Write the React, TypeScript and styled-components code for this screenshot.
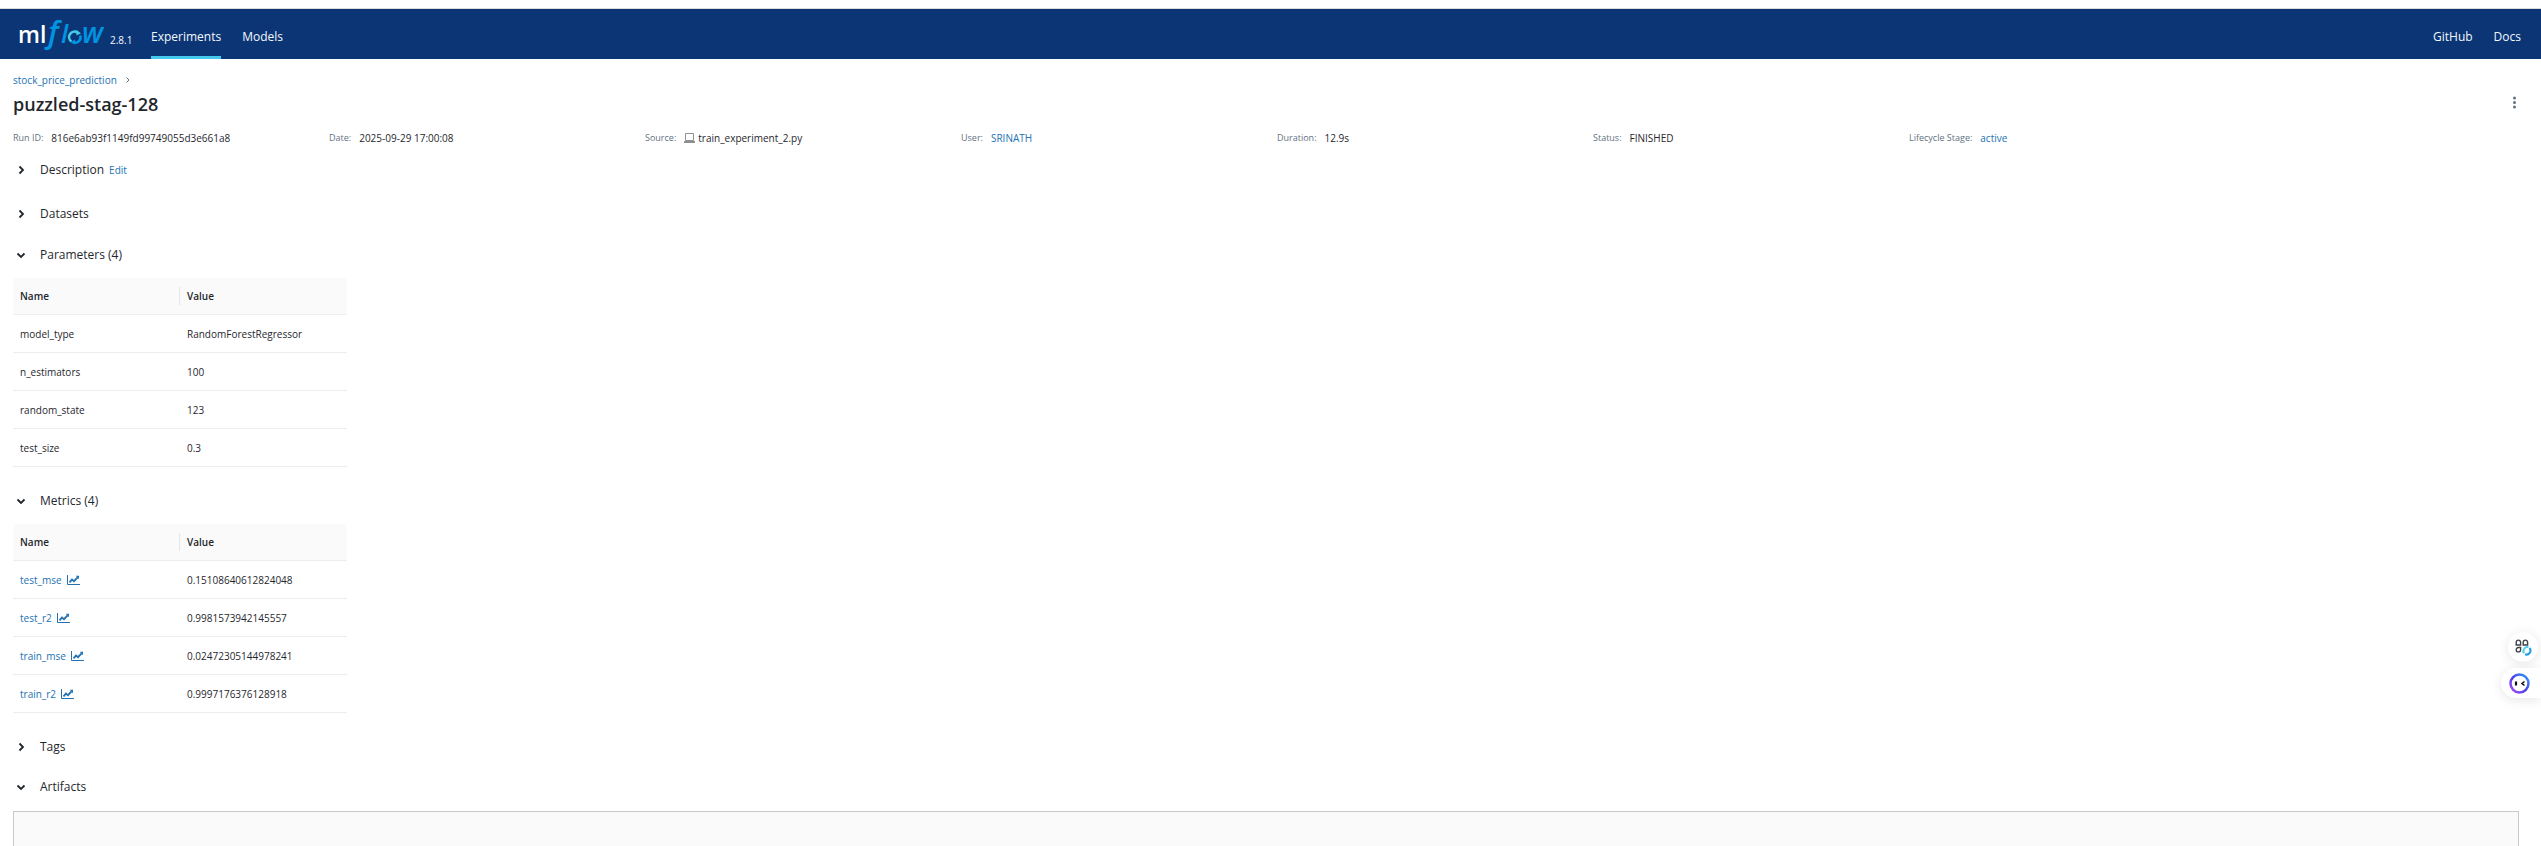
import React, { useState } from "react";
import styled, { createGlobalStyle } from "styled-components";

const Global = createGlobalStyle`
  *, *::before, *::after { box-sizing: border-box; }
  body {
    margin: 0;
    background: #fff;
    color: #1f272d;
    font-family: "Open Sans", "Noto Sans", sans-serif;
    font-size: 10px;
    line-height: 16px;
  }
`;

const blue = "#2272b4";

const Page = styled.div`
  min-height: 100vh;
  display: flex;
  flex-direction: column;
  padding-top: 8px;
`;

const Header = styled.header`
  display: flex;
  align-items: stretch;
  height: 51px;
  padding: 0 20px 0 18px;
  border-top: 1px solid #dcdcdc;
  background: #0b3574;
`;

const Brand = styled.a`
  display: flex;
  align-items: center;
  text-decoration: none;
`;

const Version = styled.span`
  align-self: flex-end;
  width: 22px;
  margin: 0 19px 11px 3px;
  color: #f3f8fd;
  font-size: 10px;
  line-height: 16px;
`;

const Nav = styled.nav<{ $end?: boolean }>`
  display: flex;
  gap: 21px;
  margin-left: ${(p) => (p.$end ? "auto" : "0")};
`;

const NavLink = styled.a<{ $active?: boolean }>`
  display: flex;
  align-items: center;
  padding-top: 8px;
  border-bottom: 3px solid ${(p) => (p.$active ? "#43c9ed" : "transparent")};
  color: #f3f8fd;
  font-size: 12px;
  text-decoration: none;
`;

const Main = styled.main`
  flex: 1;
  display: flex;
  flex-direction: column;
  padding: 13px 22px 0 13px;
`;

const Link = styled.a`
  color: ${blue};
  text-decoration: none;
`;

const Crumbs = styled.nav`
  display: flex;
  align-items: center;
  gap: 9px;
  color: #5f7281;
`;

const TitleRow = styled.div`
  display: flex;
  align-items: center;
  justify-content: space-between;
  height: 32px;
`;

const Title = styled.h1`
  margin: 0;
  font-size: 18px;
  font-weight: 600;
  line-height: 24px;
`;

const IconButton = styled.button`
  display: flex;
  padding: 0 3px 3px;
  border: 0;
  background: none;
  color: #5f7281;
  cursor: pointer;
`;

const Meta = styled.dl`
  display: grid;
  grid-template-columns: repeat(8, 1fr);
  column-gap: 22px;
  margin: 10px 0 0;
`;

const MetaItem = styled.div`
  display: flex;
  align-items: center;
  gap: 8px;
  white-space: nowrap;
`;

const MetaLabel = styled.dt`
  color: #5f7281;
  font-size: 9px;
`;

const MetaValue = styled.dd`
  display: flex;
  align-items: center;
  gap: 3px;
  margin: 0;
`;

const SectionHead = styled.div<{ $gap: number }>`
  display: flex;
  align-items: center;
  gap: 5px;
  height: 20px;
  margin-top: ${(p) => p.$gap}px;
`;

const Toggle = styled.button`
  display: flex;
  align-items: center;
  gap: 14px;
  padding: 0 0 0 3px;
  border: 0;
  background: none;
  color: inherit;
  font: inherit;
  font-size: 12px;
  line-height: 20px;
  cursor: pointer;
`;

const Table = styled.table`
  width: 334px;
  margin-top: 13px;
  border-spacing: 0;
  table-layout: fixed;
`;

const Th = styled.th`
  height: 37px;
  padding: 0;
  border-bottom: 1px solid #ededed;
  background: #fafafa;
  font-weight: 600;
  text-align: left;
  &:first-child { border-radius: 3px 0 0 0; }
  &:last-child { border-radius: 0 3px 0 0; }
`;

const ThLabel = styled.div<{ $divided?: boolean }>`
  padding-left: 7px;
  border-right: ${(p) => (p.$divided ? "1px solid #e6e6e6" : "0")};
  line-height: 18px;
`;

const Td = styled.td`
  height: 38px;
  padding: 0 7px;
  border-bottom: 1px solid #ededed;
`;

const MetricLink = styled(Link)`
  display: flex;
  align-items: center;
  gap: 5px;
`;

const Artifacts = styled.div`
  flex: 1;
  min-height: 35px;
  margin-top: 14px;
  border: 1px solid #c8c8c8;
  border-bottom: 0;
  background: #fafafa;
`;

const Dock = styled.aside`
  position: fixed;
  right: 0;
  top: 632px;
  display: flex;
  flex-direction: column;
  align-items: flex-end;
  gap: 6px;
`;

const DockButton = styled.button<{ $tab?: boolean }>`
  display: flex;
  align-items: center;
  justify-content: center;
  width: ${(p) => (p.$tab ? 40 : 30)}px;
  height: 30px;
  margin-right: ${(p) => (p.$tab ? 0 : 3)}px;
  padding: 0 ${(p) => (p.$tab ? 4 : 0)}px 0 0;
  border: 0;
  border-radius: ${(p) => (p.$tab ? "15px 0 0 15px" : "15px")};
  background: #fff;
  box-shadow: 0 2px 12px rgba(0, 0, 0, 0.1);
  cursor: pointer;
`;

const Logo = () => (
  <svg width="89" height="50" viewBox="0 0 89 50" role="img" aria-label="MLflow">
    <text x="0" y="34" fill="#fff" fontFamily="Open Sans" fontWeight="600" fontSize="23">ml</text>
    <g fill="#0194e2" fontFamily="Open Sans" fontStyle="italic" fontWeight="600">
      <text x="30" y="34" fontSize="31">f</text>
      <text x="43" y="34" fontSize="26">l</text>
      <text x="64" y="34" fontSize="28">w</text>
    </g>
    <g fill="none" strokeWidth="2.600">
      <path d="M53.500 32.500A5.200 5.200 0 0 1 59.500 23.600" stroke="#43c9ed" />
      <path d="M62.200 26.500A5.200 5.200 0 0 1 55 33" stroke="#0194e2" />
    </g>
    <path d="M58.500 21l4.500 3.200-4.500 2.400z" fill="#43c9ed" />
    <path d="M57 30.500v5l-4.500-2.200z" fill="#0194e2" />
  </svg>
);

const Chevron = ({ open }: { open: boolean }) => (
  <svg width="10" height="10" viewBox="0 0 10 10" fill="none" stroke="#1f272d" strokeWidth="1.800">
    <path d={open ? "M1.500 3.500 5 7 8.500 3.500" : "M3.500 1.500 7 5 3.500 8.500"} />
  </svg>
);

const ChartIcon = () => (
  <svg width="13" height="10" viewBox="0 0 13 10" fill="none" stroke={blue}>
    <path d="M.5 0v9.5H13" />
    <path d="M2.5 7.3 5 4.6l2 1.6 3.6-3.8" strokeWidth="1.8" />
    <path d="M8.8.8H12v3.4z" fill={blue} stroke="none" />
  </svg>
);

const LaptopIcon = () => (
  <svg width="11" height="10" viewBox="0 0 11 10" fill="none" stroke="#8f8f8f">
    <path d="M1.500.5h8v7h-8z" />
    <path d="M0 9h11" strokeWidth="2" />
  </svg>
);

const AppsIcon = () => (
  <svg width="17" height="17" viewBox="0 0 17 17" fill="none">
    <g stroke="#3f4248" strokeWidth="1.400">
      <path d="M1.200 6V3.300a2.200 2.200 0 0 1 4.400 0V6z" />
      <path d="M8.200 6V3.300a2.200 2.200 0 0 1 4.400 0V6z" />
      <path d="M5.600 8.500H3.400a2.200 2.200 0 1 0 2.200 2.200z" />
    </g>
    <path d="M9 14.300a4 4 0 0 1 4.500-6" stroke="#4fd0f2" strokeWidth="2" />
    <path d="M14.500 9a4 4 0 0 1-4.500 6.300" stroke="#1e9bea" strokeWidth="2" />
  </svg>
);

const BotIcon = () => (
  <svg width="21" height="21" viewBox="0 0 21 21" fill="none">
    <defs>
      <linearGradient id="ring" x1="0" y1="1" x2="1" y2="0">
        <stop offset="0" stopColor="#b04df5" />
        <stop offset=".45" stopColor="#4b3df0" />
        <stop offset="1" stopColor="#2f9bf5" />
      </linearGradient>
    </defs>
    <circle cx="10.500" cy="10.500" r="9" stroke="url(#ring)" strokeWidth="2.500" />
    <path d="M7 8.500v4" stroke="#111" strokeWidth="2.200" />
    <path d="M15.500 8.500 13 10.500l2.500 2" stroke="#111" strokeWidth="1.600" />
  </svg>
);

type SectionProps = {
  title: string;
  gap: number;
  initial?: boolean;
  extra?: React.ReactNode;
  children?: React.ReactNode;
};

const Section = ({ title, gap, initial = false, extra, children }: SectionProps) => {
  const [open, setOpen] = useState(initial);
  return (
    <>
      <SectionHead $gap={gap}>
        <Toggle aria-expanded={open} onClick={() => setOpen(!open)}>
          <Chevron open={open} />
          {title}
        </Toggle>
        {extra}
      </SectionHead>
      {open && children}
    </>
  );
};

const DataTable = ({ rows, metric }: { rows: string[][]; metric?: boolean }) => (
  <Table>
    <thead>
      <tr>
        <Th scope="col"><ThLabel $divided>Name</ThLabel></Th>
        <Th scope="col"><ThLabel>Value</ThLabel></Th>
      </tr>
    </thead>
    <tbody>
      {rows.map(([name, value]) => (
        <tr key={name}>
          <Td>{metric ? <MetricLink href="#">{name}<ChartIcon /></MetricLink> : name}</Td>
          <Td>{value}</Td>
        </tr>
      ))}
    </tbody>
  </Table>
);

const params = [
  ["model_type", "RandomForestRegressor"],
  ["n_estimators", "100"],
  ["random_state", "123"],
  ["test_size", "0.3"],
];

const metrics = [
  ["test_mse", "0.15108640612824048"],
  ["test_r2", "0.9981573942145557"],
  ["train_mse", "0.02472305144978241"],
  ["train_r2", "0.9997176376128918"],
];

const meta: [string, React.ReactNode][] = [
  ["Run ID:", "816e6ab93f1149fd99749055d3e661a8"],
  ["Date:", "2025-09-29 17:00:08"],
  ["Source:", <><LaptopIcon />train_experiment_2.py</>],
  ["User:", <Link href="#">SRINATH</Link>],
  ["Duration:", "12.9s"],
  ["Status:", "FINISHED"],
  ["Lifecycle Stage:", <Link href="#">active</Link>],
];

export default function App() {
  return (
    <Page>
      <Global />
      <Header>
        <Brand href="#">
          <Logo />
          <Version>2.8.1</Version>
        </Brand>
        <Nav>
          <NavLink href="#" $active>Experiments</NavLink>
          <NavLink href="#">Models</NavLink>
        </Nav>
        <Nav $end>
          <NavLink href="#">GitHub</NavLink>
          <NavLink href="#">Docs</NavLink>
        </Nav>
      </Header>
      <Main>
        <Crumbs aria-label="Breadcrumb">
          <Link href="#">stock_price_prediction</Link>
          <svg width="4" height="6" viewBox="0 0 4 6" fill="none" stroke="currentColor">
            <path d="M.5.5 3 3 .5 5.500" />
          </svg>
        </Crumbs>
        <TitleRow>
          <Title>puzzled-stag-128</Title>
          <IconButton aria-label="More actions">
            <svg width="3" height="13" viewBox="0 0 3 13" fill="currentColor">
              <circle cx="1.5" cy="2" r="1.500" />
              <circle cx="1.5" cy="6.500" r="1.500" />
              <circle cx="1.5" cy="11" r="1.500" />
            </svg>
          </IconButton>
        </TitleRow>
        <Meta>
          {meta.map(([label, value]) => (
            <MetaItem key={label}>
              <MetaLabel>{label}</MetaLabel>
              <MetaValue>{value}</MetaValue>
            </MetaItem>
          ))}
        </Meta>
        <Section title="Description" gap={14} extra={<Link href="#">Edit</Link>} />
        <Section title="Datasets" gap={24} />
        <Section title="Parameters (4)" gap={21} initial>
          <DataTable rows={params} />
        </Section>
        <Section title="Metrics (4)" gap={24} initial>
          <DataTable rows={metrics} metric />
        </Section>
        <Section title="Tags" gap={24} />
        <Section title="Artifacts" gap={20} initial>
          <Artifacts />
        </Section>
      </Main>
      <Dock>
        <DockButton aria-label="Apps"><AppsIcon /></DockButton>
        <DockButton aria-label="Assistant" $tab><BotIcon /></DockButton>
      </Dock>
    </Page>
  );
}
